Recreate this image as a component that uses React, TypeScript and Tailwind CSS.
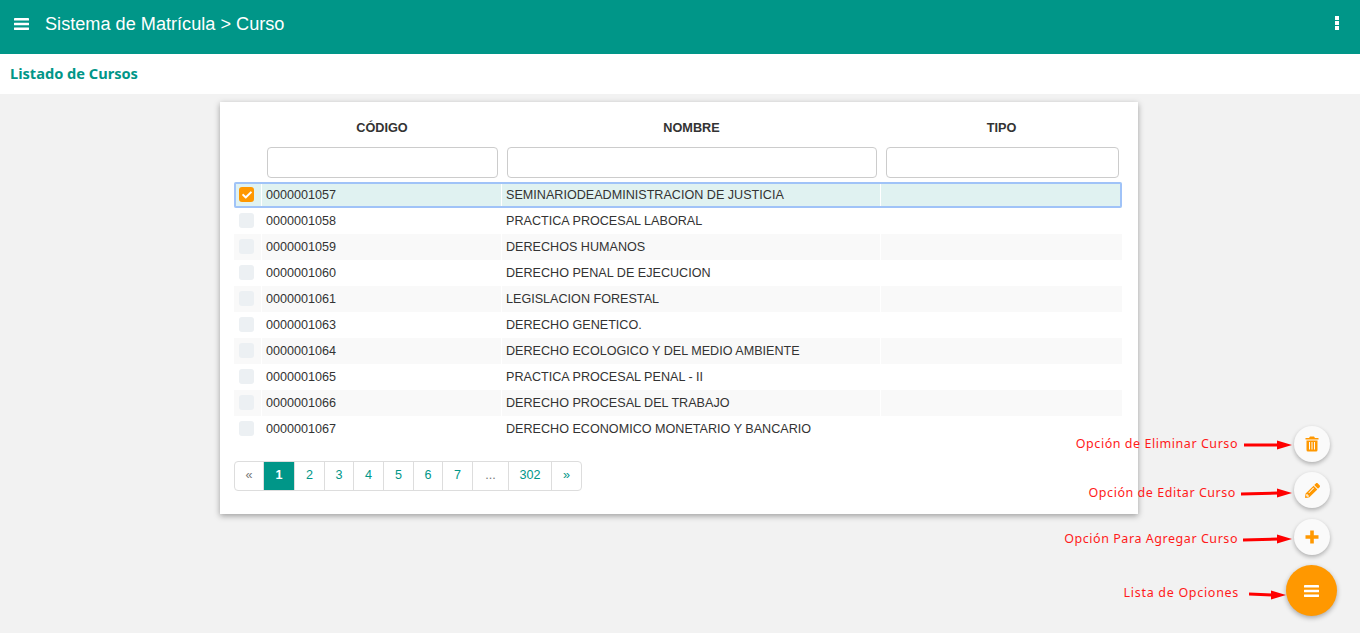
import { FaCheck, FaPencilAlt } from 'react-icons/fa'

const cursos = [
  { codigo: '0000001057', nombre: 'SEMINARIODEADMINISTRACION DE JUSTICIA' },
  { codigo: '0000001058', nombre: 'PRACTICA PROCESAL LABORAL' },
  { codigo: '0000001059', nombre: 'DERECHOS HUMANOS' },
  { codigo: '0000001060', nombre: 'DERECHO PENAL DE EJECUCION' },
  { codigo: '0000001061', nombre: 'LEGISLACION FORESTAL' },
  { codigo: '0000001063', nombre: 'DERECHO GENETICO.' },
  { codigo: '0000001064', nombre: 'DERECHO ECOLOGICO Y DEL MEDIO AMBIENTE' },
  { codigo: '0000001065', nombre: 'PRACTICA PROCESAL PENAL - II' },
  { codigo: '0000001066', nombre: 'DERECHO PROCESAL DEL TRABAJO' },
  { codigo: '0000001067', nombre: 'DERECHO ECONOMICO MONETARIO Y BANCARIO' },
]

const paginas = [
  { text: '«', w: 'w-[29px]', muted: true },
  { text: '1', w: 'w-[31px]', active: true },
  { text: '2', w: 'w-[30px]' },
  { text: '3', w: 'w-[29px]' },
  { text: '4', w: 'w-[30px]' },
  { text: '5', w: 'w-[30px]' },
  { text: '6', w: 'w-[29px]' },
  { text: '7', w: 'w-[30px]' },
  { text: '...', w: 'w-[36px]', muted: true },
  { text: '302', w: 'w-[43px]' },
  { text: '»', w: 'w-[29px]' },
]

function BarsIcon({ className }: { className?: string }) {
  return (
    <svg width="15" height="12" viewBox="0 0 15 12" fill="currentColor" className={className}>
      <rect x="0" y="0" width="15" height="2.6" rx="0.4" />
      <rect x="0" y="4.7" width="15" height="2.6" rx="0.4" />
      <rect x="0" y="9.4" width="15" height="2.6" rx="0.4" />
    </svg>
  )
}

function TrashIcon() {
  return (
    <svg width="14" height="16" viewBox="0 0 14 16" fill="#ff9800">
      <path d="M5 0.5h4l1 1.5h3.5v1.5h-13V2H4z" />
      <path
        fillRule="evenodd"
        d="M1.5 4.5h11V14a1.5 1.5 0 0 1-1.5 1.5H3A1.5 1.5 0 0 1 1.5 14zM4 6v7.5h1V6zM6.5 6v7.5h1V6zM9 6v7.5h1V6z"
      />
    </svg>
  )
}

function PlusIcon() {
  return (
    <svg width="14" height="14" viewBox="0 0 14 14" fill="#ff9800">
      <path d="M5.2 0.5h3.6v4.7h4.7v3.6H8.8v4.7H5.2V8.8H0.5V5.2h4.7z" />
    </svg>
  )
}

function Arrow({ width, tilt = 0, className }: { width: number; tilt?: number; className?: string }) {
  return (
    <svg width={width} height="12" viewBox={`0 0 ${width} 12`} className={`block ${className ?? ''}`}>
      <path d={`M0 ${6 + tilt}L${width - 14} 6`} stroke="#ff0000" strokeWidth="3" />
      <path d={`M${width - 15} 1.5L${width} 6L${width - 15} 10.5z`} fill="#ff0000" />
    </svg>
  )
}

function Nota({
  text,
  arrow,
  tilt,
  className,
  textClass,
  arrowClass,
}: {
  text: string
  arrow: number
  tilt?: number
  className?: string
  textClass?: string
  arrowClass?: string
}) {
  return (
    <div
      className={`flex items-center font-['Noto_Sans',sans-serif] text-[12.5px] tracking-[0.55px] text-[#ff1a1a] ${className ?? ''}`}
    >
      <span className={`whitespace-nowrap ${textClass ?? ''}`}>{text}</span>
      <Arrow width={arrow} tilt={tilt} className={arrowClass} />
    </div>
  )
}

function Boton({ children }: { children: React.ReactNode }) {
  return (
    <div className="flex h-9 w-9 items-center justify-center rounded-full bg-[#fafafa] shadow-[0_2px_4px_rgba(0,0,0,0.28)]">
      {children}
    </div>
  )
}

export default function App() {
  return (
    <div className="relative h-[633px] overflow-hidden bg-[#f2f2f2] font-['Liberation_Sans',Arial,sans-serif] text-[#333]">
      <header className="flex h-[54px] items-center justify-between bg-[#009688] pb-[6px] pl-[14px] pr-[21px] text-white">
        <div className="flex items-center gap-[16px]">
          <BarsIcon />
          <span className="mt-[2px] text-[18.15px]">Sistema de Matrícula &gt; Curso</span>
        </div>
        <div className="mb-[2px] flex flex-col gap-[1px]">
          <span className="block h-[4px] w-[4px] bg-white" />
          <span className="block h-[4px] w-[4px] bg-white" />
          <span className="block h-[4px] w-[4px] bg-white" />
        </div>
      </header>

      <div className="flex h-10 items-center bg-white pl-[10px] font-['Noto_Sans',sans-serif] text-[14.6px] font-bold text-[#009688]">
        Listado de Cursos
      </div>

      <main className="ml-[220px] mt-2 h-[412px] w-[918px] bg-white pl-[14px] pr-[16px] pt-[20px] shadow-[0_2px_6px_rgba(0,0,0,0.35)]">
        <div className="flex h-[14px] items-center text-[12.7px] font-bold text-[#333]">
          <div className="w-[28px]" />
          <div className="w-[240px] text-center">CÓDIGO</div>
          <div className="w-[379px] text-center">NOMBRE</div>
          <div className="w-[241px] text-center">TIPO</div>
        </div>

        <div className="mt-[11px] flex h-[31px]">
          <div className="w-[33px]" />
          <input className="h-[31px] w-[231px] rounded-[4px] border border-[#ccc] bg-white" />
          <input className="ml-[9px] h-[31px] w-[370px] rounded-[4px] border border-[#ccc] bg-white" />
          <input className="ml-[9px] h-[31px] w-[233px] rounded-[4px] border border-[#ccc] bg-white" />
        </div>

        <div className="mt-[4px] text-[12.6px] text-[#333]">
          {cursos.map((curso, i) => (
            <div
              key={curso.codigo}
              className={
                i === 0
                  ? 'flex h-[26px] items-center rounded-[2px] bg-[#e0f2f1] outline-2 -outline-offset-2 outline-[#a0c3f8]'
                  : i % 2 === 0
                    ? 'flex h-[26px] items-center bg-[#f9f9f9]'
                    : 'flex h-[26px] items-center'
              }
            >
              <div className="flex h-full w-[28px] items-center justify-center border-r border-white pb-[1px] pr-[2px]">
                {i === 0 ? (
                  <span className="flex h-[15px] w-[15px] items-center justify-center rounded-[3px] bg-[#ff9800] text-white">
                    <FaCheck className="h-[10px] w-[10px]" />
                  </span>
                ) : (
                  <span className="block h-[15px] w-[15px] rounded-[3px] bg-[#ecf0f3]" />
                )}
              </div>
              <div className="flex h-full w-[240px] items-center border-r border-white pl-[4px]">{curso.codigo}</div>
              <div className="flex h-full w-[379px] items-center border-r border-white pl-[4px]">{curso.nombre}</div>
              <div className="h-full w-[241px]" />
            </div>
          ))}
        </div>

        <nav className="mt-[19px] flex h-[30px] w-max overflow-hidden rounded-[4px] border border-[#ddd] text-[12.6px]">
          {paginas.map((p) => (
            <div
              key={p.text}
              className={`flex h-full items-center justify-center border-r border-[#ddd] pb-[1px] last:border-r-0 ${p.w} ${
                p.active ? 'bg-[#009688] font-bold text-white' : p.muted ? 'text-[#777]' : 'text-[#009688]'
              }`}
            >
              {p.text}
            </div>
          ))}
        </nav>
      </main>

      <div className="absolute right-[30px] top-[426px] flex flex-col items-end gap-[10px]">
        <div className="flex items-center">
          <Nota text="Opción de Eliminar Curso" arrow={48} textClass="mr-[6px]" arrowClass="mt-[2px]" />
          <div className="ml-[2px]">
            <Boton>
              <TrashIcon />
            </Boton>
          </div>
        </div>
        <div className="flex items-center">
          <Nota text="Opción de Editar Curso" arrow={51} tilt={1} className="mt-[6px]" textClass="mr-[5px]" />
          <div className="ml-[2px]">
            <Boton>
              <FaPencilAlt className="h-[15px] w-[15px] text-[#ff9800]" />
            </Boton>
          </div>
        </div>
        <div className="mt-[1px] flex items-center">
          <Nota text="Opción Para Agregar Curso" arrow={49} tilt={1} className="mt-[4px]" textClass="mr-[5px]" />
          <div className="ml-[2px]">
            <Boton>
              <PlusIcon />
            </Boton>
          </div>
        </div>
      </div>

      <div className="absolute right-[23px] top-[565px] flex items-center">
        <Nota
          text="Lista de Opciones"
          arrow={37}
          tilt={-1}
          className="mt-[6px]"
          textClass="mr-[10px] tracking-[0.7px]"
          arrowClass="mt-[2px]"
        />
        <div className="flex h-[51px] w-[51px] items-center justify-center rounded-full bg-[#ff9800] shadow-[0_2px_5px_rgba(0,0,0,0.3)]">
          <BarsIcon className="text-white" />
        </div>
      </div>
    </div>
  )
}
